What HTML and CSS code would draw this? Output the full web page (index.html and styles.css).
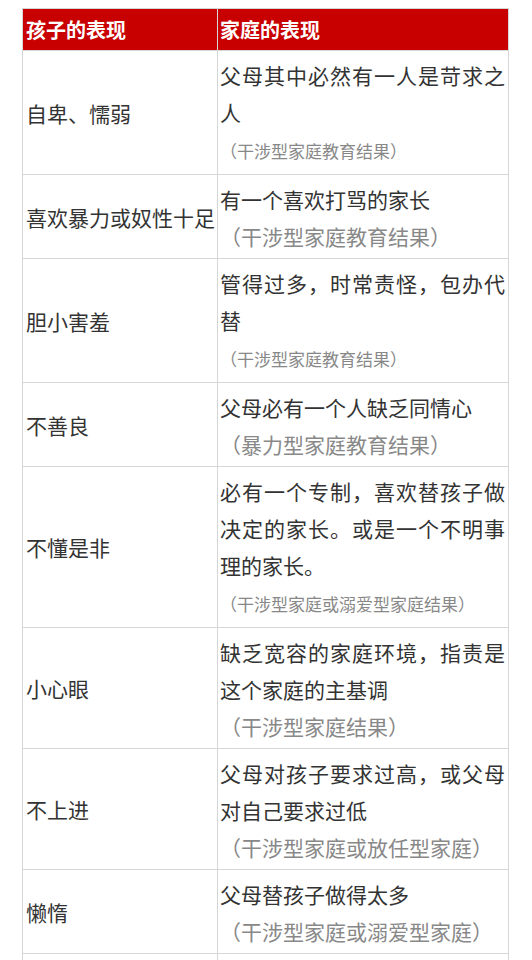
FILE: index.html
```html
<!DOCTYPE html>
<html lang="zh-CN">
<head>
<meta charset="utf-8">
<title>孩子的表现与家庭的表现</title>
<link rel="stylesheet" href="styles.css">
</head>
<body>
<div class="page">
  <table class="compare">
    <colgroup>
      <col class="col-child">
      <col class="col-family">
    </colgroup>
    <thead>
      <tr>
        <th>孩子的表现</th>
        <th>家庭的表现</th>
      </tr>
    </thead>
    <tbody>
      <tr>
        <td class="child">自卑、懦弱</td>
        <td class="family"><div class="main">父母其中必然有一人是苛求之人</div><div class="note small">（干涉型家庭教育结果）</div></td>
      </tr>
      <tr>
        <td class="child">喜欢暴力或奴性十足</td>
        <td class="family"><div class="main">有一个喜欢打骂的家长</div><div class="note">（干涉型家庭教育结果）</div></td>
      </tr>
      <tr>
        <td class="child">胆小害羞</td>
        <td class="family"><div class="main">管得过多，时常责怪，包办代替</div><div class="note small">（干涉型家庭教育结果）</div></td>
      </tr>
      <tr>
        <td class="child">不善良</td>
        <td class="family"><div class="main">父母必有一个人缺乏同情心</div><div class="note">（暴力型家庭教育结果）</div></td>
      </tr>
      <tr>
        <td class="child">不懂是非</td>
        <td class="family"><div class="main">必有一个专制，喜欢替孩子做决定的家长。或是一个不明事理的家长。</div><div class="note small">（干涉型家庭或溺爱型家庭结果）</div></td>
      </tr>
      <tr>
        <td class="child">小心眼</td>
        <td class="family"><div class="main">缺乏宽容的家庭环境，指责是这个家庭的主基调</div><div class="note">（干涉型家庭结果）</div></td>
      </tr>
      <tr>
        <td class="child">不上进</td>
        <td class="family"><div class="main">父母对孩子要求过高，或父母对自己要求过低</div><div class="note">（干涉型家庭或放任型家庭）</div></td>
      </tr>
      <tr>
        <td class="child">懒惰</td>
        <td class="family"><div class="main">父母替孩子做得太多</div><div class="note">（干涉型家庭或溺爱型家庭）</div></td>
      </tr>
      <tr class="more">
        <td class="child"></td>
        <td class="family"></td>
      </tr>
    </tbody>
  </table>
</div>
</body>
</html>
```

FILE: styles.css
```css
html, body {
  margin: 0;
  padding: 0;
  background: #ffffff;
}

body {
  font-family: "Noto Sans CJK SC", "Noto Sans", "DejaVu Sans", sans-serif;
  color: #333333;
}

.page {
  padding: 8px 23px 0 22px;
}

.compare {
  width: 100%;
  border-collapse: collapse;
  table-layout: fixed;
}

.col-child {
  width: 195px;
}

.compare th,
.compare td {
  border: 1px solid #d6d6d6;
}

.compare th {
  background: #c80000;
  color: #ffffff;
  font-size: 20px;
  font-weight: 700;
  text-align: left;
  height: 41px;
  line-height: 41px;
  padding: 0 3px;
  box-sizing: border-box;
}

.compare th:first-child {
  padding-left: 3px;
}

.compare th:last-child {
  padding-left: 2px;
}

.child {
  font-size: 21px;
  line-height: 30px;
  padding: 0 1px 0 3px;
  white-space: nowrap;
  vertical-align: middle;
  color: #333333;
}

.family {
  padding: 6px 3px 4px 2px;
  vertical-align: top;
}

.main {
  font-size: 21px;
  line-height: 37px;
  text-align: justify;
  color: #333333;
}

.note {
  font-size: 21px;
  line-height: 36px;
  color: #888888;
}

.note.small {
  font-size: 17px;
  line-height: 39px;
}

.more td {
  height: 80px;
}
```
